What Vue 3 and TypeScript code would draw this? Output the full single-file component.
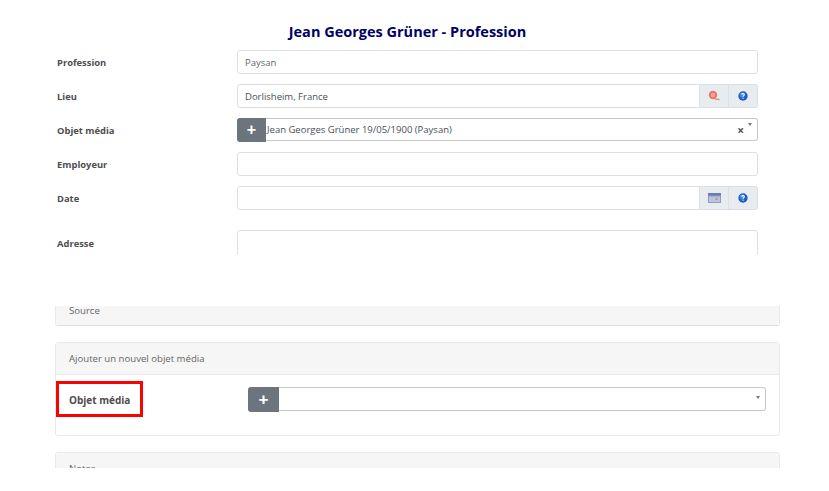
<script setup lang="ts">
interface Row { label: string; value?: string; kind: string }
const rows: Row[] = [
  { label: 'Profession', value: 'Paysan', kind: 'input muted' },
  { label: 'Lieu', value: 'Dorlisheim, France', kind: 'place' },
  { label: 'Objet média', value: 'Jean Georges Grüner 19/05/1900 (Paysan)', kind: 'select' },
  { label: 'Employeur', kind: 'input' },
  { label: 'Date', kind: 'date' },
]
</script>

<template>
  <div class="page">
    <section class="top">
      <h1 class="title">Jean Georges Grüner - Profession</h1>
      <div v-for="r in rows" :key="r.label" class="row" :class="{ 'row-date': r.kind === 'date' }">
        <label class="label">{{ r.label }}</label>
        <div v-if="r.kind === 'select'" class="select-group">
          <button class="plus">+</button>
          <div class="select">
            <span class="select-text">{{ r.value }}</span>
            <span class="clear">×</span>
            <span class="caret"></span>
          </div>
        </div>
        <div v-else class="group">
          <div class="input" :class="{ muted: r.kind === 'input muted' }">{{ r.value }}</div>
          <template v-if="r.kind === 'place' || r.kind === 'date'">
            <span class="addon">
              <svg v-if="r.kind === 'place'" width="12" height="12" viewBox="0 0 12 12">
                <circle cx="5" cy="5" r="4.2" fill="#e8756c" />
                <circle cx="5" cy="5" r="2.2" fill="#f0a79c" />
                <path d="M7 9 L11.5 9.5" stroke="#d9a25c" stroke-width="1.4" />
              </svg>
              <svg v-else width="13" height="10" viewBox="0 0 13 10">
                <rect width="13" height="10" fill="#8d9cc4" />
                <rect y="0" width="13" height="2.5" fill="#6b7dab" />
                <rect x="1" y="3.5" width="11" height="5.5" fill="#b9c4de" />
                <rect x="7.5" y="5" width="2" height="2" fill="#d98b7a" />
              </svg>
            </span>
            <span class="addon last">
              <svg width="10" height="10" viewBox="0 0 10 10">
                <circle cx="5" cy="5" r="4.7" fill="#1d5fc9" />
                <circle cx="4.2" cy="3.8" r="2.6" fill="#3f82e0" />
                <path d="M3.7 3.6 C3.9 2.3 6.4 2.3 6.3 3.8 C6.2 4.7 5 4.7 5 5.8" fill="none" stroke="#fff" stroke-width="1.1" />
                <rect x="4.5" y="6.6" width="1.1" height="1.1" fill="#fff" />
              </svg>
            </span>
          </template>
        </div>
      </div>
      <div class="row row-address">
        <label class="label">Adresse</label>
        <div class="group"><div class="textarea"></div></div>
      </div>
    </section>

    <section class="bottom">
      <div class="card card-source">
        <div class="card-head head-source">Source</div>
      </div>
      <div class="card">
        <div class="card-head">Ajouter un nouvel objet média</div>
        <div class="card-body">
          <label class="boxed">Objet média</label>
          <div class="select-group wide">
            <button class="plus">+</button>
            <div class="select">
              <span class="select-text"></span>
              <span class="caret"></span>
            </div>
          </div>
        </div>
      </div>
      <div class="card">
        <div class="card-head">Notes</div>
      </div>
    </section>
  </div>
</template>

<style>
html, body { margin: 0; background: #fff; }
</style>

<style scoped>
.page {
  width: 829px;
  height: 491px;
  overflow: hidden;
  background: #fff;
  font-family: "Open Sans", "Liberation Sans", sans-serif;
  font-size: 9.5px;
  color: #495057;
}
.top { height: 255px; overflow: hidden; padding: 0 71px 0 57px; box-sizing: border-box; }
.title {
  margin: 0 -71px 0 -57px;
  padding: 23px 14px 0 0;
  height: 50px;
  box-sizing: border-box;
  text-align: center;
  font-size: 14.5px;
  line-height: 18px;
  font-weight: 700;
  color: #000066;
}
.row { display: flex; align-items: center; height: 24px; margin-bottom: 10px; }
.row-date { margin-top: 1px; margin-bottom: 20px; }
.row-address { align-items: flex-start; height: 60px; }
.label {
  width: 180px;
  flex: none;
  font-weight: 700;
  color: #4d4d4d;
  font-size: 9.4px;
  padding-top: 1px;
}
.row:first-child .label { padding-top: 0; }
.row-address .label { padding-top: 7px; }
.group { flex: 1; display: flex; height: 24px; }
.input, .textarea {
  flex: 1;
  min-width: 0;
  box-sizing: border-box;
  border: 1px solid #dcdfe3;
  border-radius: 3px;
  padding: 0 7px;
  line-height: 23px;
  color: #495057;
  background: #fff;
}
.input.muted { color: #5f676e; }
.textarea { height: 60px; }
.group:has(.addon) .input { border-radius: 3px 0 0 3px; }
.addon {
  width: 29px;
  box-sizing: border-box;
  display: flex;
  align-items: center;
  justify-content: center;
  background: #e9ecef;
  border: 1px solid #dcdfe3;
  border-left: 0;
}
.addon.last { border-radius: 0 3px 3px 0; }
.select-group { flex: 1; display: flex; height: 24px; }
.plus {
  width: 29px;
  flex: none;
  padding: 0;
  border: 0;
  border-radius: 3px 0 0 3px;
  background: #6c757d;
  color: #fff;
  font: 700 16px/22px "Liberation Sans", sans-serif;
}
.select {
  flex: 1;
  display: flex;
  align-items: center;
  box-sizing: border-box;
  height: 23px;
  border: 1px solid #c6c8ca;
  border-left: 0;
  border-radius: 0 3px 3px 0;
  padding-left: 1px;
  position: relative;
}
.select-text { flex: 1; color: #495057; padding-bottom: 1px; }
.clear { font-size: 12px; line-height: 12px; font-weight: 700; color: #555; margin-right: 13px; margin-top: 2px; }
.caret {
  position: absolute;
  right: 5px;
  top: 8px;
  width: 0;
  height: 0;
  border-left: 2.5px solid transparent;
  border-right: 2.5px solid transparent;
  border-top: 3px solid #777;
}
.select-group .clear + .caret { top: 4px; }
.bottom { margin-top: 51px; height: 162px; overflow: hidden; padding: 0 49px 0 55px; }
.card {
  border: 1px solid #e9e9e9;
  border-radius: 3px;
  margin-bottom: 16px;
  background: #fff;
}
.card-source { border-top: 0; border-bottom-color: #dedede; border-radius: 0 0 3px 3px; }
.card-head {
  height: 32px;
  box-sizing: border-box;
  background: #f6f6f6;
  border-bottom: 1px solid #e9e9e9;
  padding: 9px 13px 0;
  line-height: 14px;
  color: #666;
  font-size: 9.6px;
}
.head-source { height: 19px; padding-top: 0; line-height: 9px; border-bottom: 0; }
.card-body {
  height: 60px;
  box-sizing: border-box;
  display: flex;
  align-items: flex-start;
  padding-top: 6px;
}
.boxed {
  width: 87px;
  height: 36px;
  box-sizing: border-box;
  border: 3px solid #f00;
  padding: 1px 0 0 10px;
  line-height: 30px;
  font-size: 10px;
  font-weight: 700;
  color: #4d4d4d;
  flex: none;
}
.wide {
  flex: none;
  width: 518px;
  height: 25px;
  margin-left: 105px;
  margin-top: 6px;
}
.wide .plus { width: 31px; font-size: 17px; }
.wide .select { height: 24px; }
</style>
